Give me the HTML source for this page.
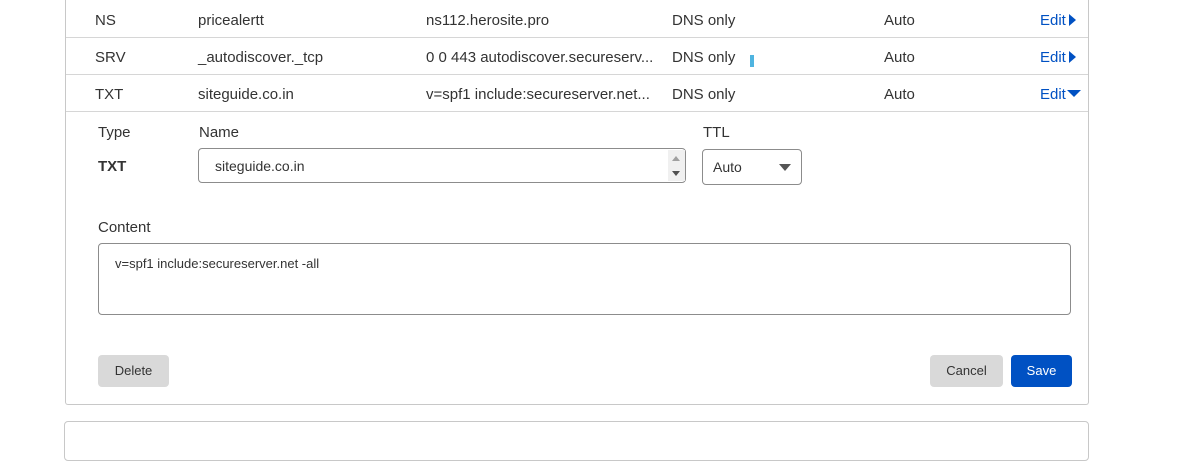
<!DOCTYPE html>
<html><head><meta charset="utf-8"><style>
*{box-sizing:border-box;margin:0;padding:0}
body{width:1198px;height:450px;background:#fff;position:relative;overflow:hidden;font-family:"Liberation Sans",sans-serif;color:#333;font-size:15px}
.a{position:absolute;white-space:nowrap}
.box{position:absolute;left:65px;top:-5px;width:1024px;height:410px;border:1px solid #c8c8c8;border-top:none;border-radius:0 0 3px 3px}
.line{position:absolute;left:66px;width:1022px;height:1px;background:#d6d6d6}
.edit{color:#0051c3}
.tri{display:inline-block;width:0;height:0;border-top:6px solid transparent;border-bottom:6px solid transparent;border-left:7px solid #0051c3;vertical-align:-1px;margin-left:3px}
.trid{display:inline-block;width:0;height:0;border-left:7px solid transparent;border-right:7px solid transparent;border-top:7px solid #0051c3;vertical-align:2px;margin-left:1px}
.inp{position:absolute;border:1px solid #8c8c8c;border-radius:4px;background:#fff}
.btn{position:absolute;border-radius:4px;font-size:13px;text-align:center}
</style></head><body>
<div class="box"></div>
<div class="line" style="top:37px"></div>
<div class="line" style="top:74px"></div>
<div class="line" style="top:111px"></div>

<div class="a" style="left:95px;top:12px">NS</div>
<div class="a" style="left:198px;top:12px">pricealertt</div>
<div class="a" style="left:426px;top:12px">ns112.herosite.pro</div>
<div class="a" style="left:672px;top:12px">DNS only</div>
<div class="a" style="left:884px;top:12px">Auto</div>
<div class="a edit" style="left:1040px;top:12px">Edit<span class="tri"></span></div>

<div class="a" style="left:95px;top:49px">SRV</div>
<div class="a" style="left:198px;top:49px">_autodiscover._tcp</div>
<div class="a" style="left:426px;top:49px">0 0 443 autodiscover.secureserv...</div>
<div class="a" style="left:672px;top:49px">DNS only</div>
<div class="a" style="left:750px;top:55px;width:4px;height:12px;background:#4fb4e0"></div>
<div class="a" style="left:884px;top:49px">Auto</div>
<div class="a edit" style="left:1040px;top:49px">Edit<span class="tri"></span></div>

<div class="a" style="left:95px;top:86px">TXT</div>
<div class="a" style="left:198px;top:86px">siteguide.co.in</div>
<div class="a" style="left:426px;top:86px">v=spf1 include:secureserver.net...</div>
<div class="a" style="left:672px;top:86px">DNS only</div>
<div class="a" style="left:884px;top:86px">Auto</div>
<div class="a edit" style="left:1040px;top:86px">Edit<span class="trid"></span></div>

<div class="a" style="left:98px;top:124px">Type</div>
<div class="a" style="left:199px;top:124px">Name</div>
<div class="a" style="left:703px;top:124px">TTL</div>
<div class="a" style="left:98px;top:158px;font-weight:bold">TXT</div>

<div class="inp" style="left:198px;top:148px;width:488px;height:35px"></div>
<div class="a" style="left:215px;top:158px;font-size:14px">siteguide.co.in</div>
<div class="a" style="left:668px;top:150px;width:17px;height:31px;background:#f0f0f0"></div>
<div class="a" style="left:672px;top:156px;border-left:4px solid transparent;border-right:4px solid transparent;border-bottom:5px solid #a0a0a0"></div>
<div class="a" style="left:672px;top:171px;border-left:4px solid transparent;border-right:4px solid transparent;border-top:5px solid #505050"></div>

<div class="inp" style="left:702px;top:149px;width:100px;height:36px"></div>
<div class="a" style="left:713px;top:159px;font-size:14px">Auto</div>
<div class="a" style="left:779px;top:164px;border-left:6px solid transparent;border-right:6px solid transparent;border-top:7px solid #555"></div>

<div class="a" style="left:98px;top:219px">Content</div>
<div class="inp" style="left:98px;top:243px;width:973px;height:72px"></div>
<div class="a" style="left:115px;top:256px;font-size:13px">v=spf1 include:secureserver.net -all</div>

<div class="btn" style="left:98px;top:355px;width:71px;height:32px;background:#d9d9d9;line-height:32px">Delete</div>
<div class="btn" style="left:930px;top:355px;width:73px;height:32px;background:#d9d9d9;line-height:32px">Cancel</div>
<div class="btn" style="left:1011px;top:355px;width:61px;height:32px;background:#0051c3;color:#fff;line-height:32px">Save</div>

<div class="a" style="left:64px;top:421px;width:1025px;height:40px;border:1px solid #c8c8c8;border-radius:4px"></div>
</body></html>
